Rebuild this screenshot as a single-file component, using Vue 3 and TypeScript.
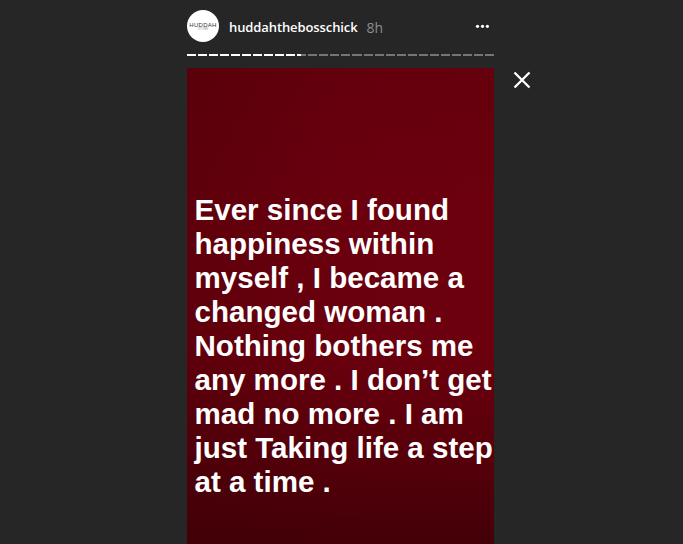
<script setup lang="ts">
interface Story {
  username: string
  age: string
  total: number
  current: number
  progress: number
  lines: string[]
}

const story: Story = {
  username: 'huddahthebosschick',
  age: '8h',
  total: 28,
  current: 10,
  progress: 45,
  lines: [
    'Ever since I found',
    'happiness within',
    'myself , I became a',
    'changed woman .',
    'Nothing bothers me',
    'any more . I don’t get',
    'mad no more . I am',
    'just Taking life a step',
    'at a time .',
  ],
}

const fillOf = (index: number) => {
  if (index < story.current) return 100
  return index === story.current ? story.progress : 0
}
</script>

<template>
  <main class="viewer">
    <section class="story">
      <header class="story__header">
        <div class="avatar">
          <span class="avatar__name">HUDDAH</span>
          <span class="avatar__sub">STORE</span>
        </div>
        <span class="story__username">{{ story.username }}</span>
        <span class="story__age">{{ story.age }}</span>
        <button class="icon-button story__more" aria-label="More options">
          <svg width="14" height="4" viewBox="0 0 14 4" fill="#fff">
            <circle cx="2.5" cy="2.3" r="1.6" />
            <circle cx="7.5" cy="2.3" r="1.6" />
            <circle cx="12.4" cy="2.3" r="1.6" />
          </svg>
        </button>
      </header>

      <div class="progress">
        <div v-for="n in story.total" :key="n" class="progress__segment">
          <div class="progress__fill" :style="{ width: fillOf(n - 1) + '%' }"></div>
        </div>
      </div>

      <article class="card">
        <p class="card__text">
          <span v-for="line in story.lines" :key="line" class="card__line">{{ line }}</span>
        </p>
      </article>
    </section>

    <button class="icon-button close" aria-label="Close">
      <svg width="18" height="18" viewBox="0 0 18 18" stroke="#fff" stroke-width="2.3">
        <path d="M1.5 1.5 16.5 16.5M16.5 1.5 1.5 16.5" />
      </svg>
    </button>
  </main>
</template>

<style>
body {
  background: #262626;
}
</style>

<style scoped>
.viewer {
  display: flex;
  align-items: flex-start;
  height: 544px;
  padding-left: 187px;
  box-sizing: border-box;
  overflow: hidden;
  background: #262626;
  color: #fff;
  font-family: 'Open Sans', 'Noto Sans', sans-serif;
}

.icon-button {
  display: flex;
  padding: 0;
  border: 0;
  background: none;
  cursor: pointer;
}

.story {
  display: flex;
  flex-direction: column;
  width: 307px;
  height: 544px;
}

.story__header {
  display: flex;
  align-items: center;
  height: 32px;
  margin-top: 10px;
}

.avatar {
  display: flex;
  flex-direction: column;
  align-items: center;
  justify-content: center;
  width: 32px;
  height: 32px;
  border-radius: 50%;
  background: #fff;
  color: #333;
  overflow: hidden;
}

.avatar__name {
  font: 6px/6px 'Liberation Sans', sans-serif;
  letter-spacing: 0.3px;
}

.avatar__sub {
  color: #999;
  font: 3px/3px 'Liberation Sans', sans-serif;
}

.story__username {
  margin-left: 10px;
  padding-top: 2px;
  font-size: 13px;
  font-weight: 600;
  letter-spacing: -0.1px;
  line-height: 18px;
}

.story__age {
  margin-left: 9px;
  padding-top: 3px;
  color: #8e8e8e;
  font-size: 14px;
  line-height: 18px;
}

.story__more {
  margin-right: 5px;
  margin-left: auto;
}

.progress {
  display: flex;
  gap: 2px;
  margin-top: 12px;
}

.progress__segment {
  flex: 1;
  height: 2px;
  background: #757575;
}

.progress__fill {
  height: 100%;
  background: #fff;
}

.card {
  flex: 1;
  margin-top: 12px;
  background:
    linear-gradient(
      180deg,
      rgba(60, 0, 6, 0.15) 0%,
      rgba(60, 0, 6, 0) 30%,
      rgba(60, 0, 6, 0) 60%,
      rgba(60, 0, 6, 0.85) 100%
    ),
    linear-gradient(90deg, #5e000b 0%, #6a000e 50%, #6c000e 100%);
}

.card__text {
  margin: 125px 0 0 7.5px;
  font: bold 29.55px/34px 'Liberation Sans', Arial, sans-serif;
  white-space: nowrap;
}

.card__line {
  display: block;
}

.close {
  margin: 71px 0 0 19px;
}
</style>
